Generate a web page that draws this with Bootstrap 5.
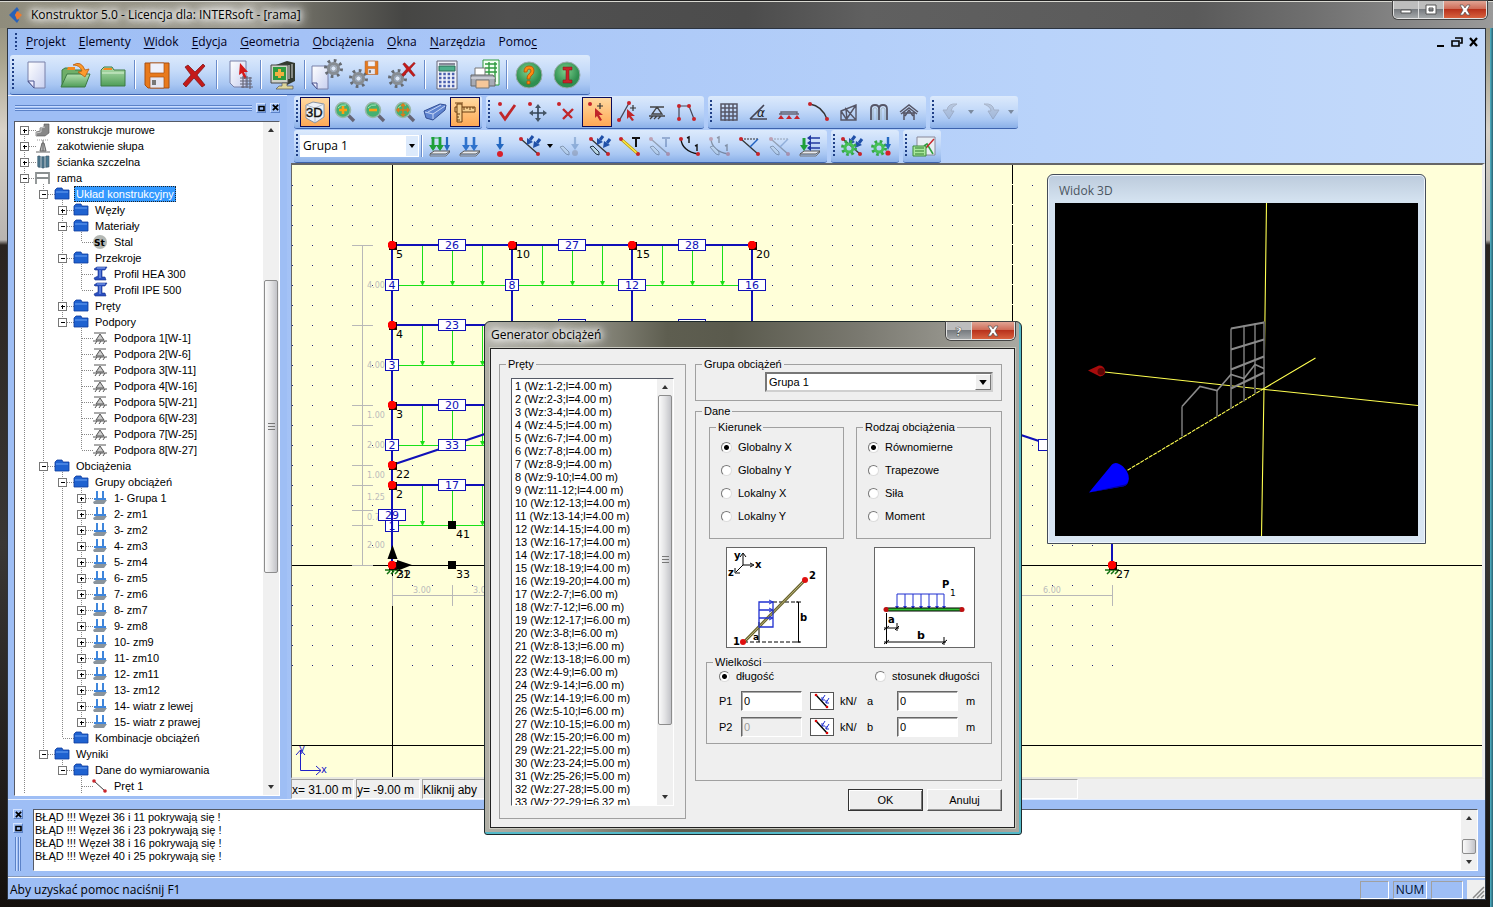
<!DOCTYPE html>
<html lang="pl">
<head>
<meta charset="utf-8">
<meta name="viewport" content="width=device-width, initial-scale=1">
<title>Konstruktor 5.0 - [rama]</title>
<link rel="stylesheet" href="https://cdn.jsdelivr.net/npm/bootstrap@5.3.0/dist/css/bootstrap.min.css">
<style>
:root{--ui:"Open Sans","Noto Sans",sans-serif;--sys:"Liberation Sans",Arial,sans-serif;--blue:#9ebef5}
body{font:11px/16px var(--sys);color:#000;overflow:hidden;background:#000}
.win{padding:0 7px 7px 7px;background:
 linear-gradient(90deg,transparent calc(100% - 3px),#4fb4c8 calc(100% - 3px),#2a6070 100%),
 linear-gradient(180deg,#8b8878 0,#a9a48e 60px,#d8d2c8 130px,#b8b4b0 240px,#2a2420 245px,#3a3734 60%,#14100d 100%)}
.win-title{height:28px;font:12px/16px var(--ui);margin:0 -7px;padding:0 6px 0 9px;border-top:1px solid #222;box-shadow:inset 0 1px #d9d9d2;
 background:linear-gradient(90deg,#8f8c7c 0,#a09e94 17%,#6a6961 21%,#464644 27%,#505050 34%,#4c4c4c 50%,#606060 58%,#5a5a5a 80%,#707070 88%,#9a9a9a 100%)}
.glow{text-shadow:0 0 5px #fff,0 0 8px #fff,0 0 10px #fff,0 0 12px #fff,0 0 14px #eee;white-space:nowrap}
.client{background:linear-gradient(90deg,#9ebef5 0,#a4c2f6 20%,#b9d3fa 70%,#c4dafa 100%);border:1px solid #2c3440;min-height:0}
.cap{border:1px solid #e3e3e3;border-top:0;border-radius:0 0 5px 5px;overflow:hidden;height:18px;align-self:flex-start;box-shadow:0 0 0 1px #444}
.cap button{border:0;padding:0;height:17px;width:25px;background:linear-gradient(#bdbdbd 0 45%,#777b80 50%,#a5a8aa);border-right:1px solid #ddd;display:flex;align-items:center;justify-content:center}
.cap .x{background:linear-gradient(#e0a494 0,#cf6d59 45%,#b8321c 50%,#d8613e);border:0;width:42px}
.menu{height:26px;font:12px/16px var(--ui);padding:0 0 1px 5px}
.menu a{color:#00001c;text-decoration:none;margin-right:13px}
.menu u{text-underline-offset:2px}
.grip{width:3px;align-self:stretch;margin:4px 1px 4px 2px;background:repeating-linear-gradient(#1f3f86 0 2px,transparent 2px 4px);background-clip:content-box;padding-right:1px;flex:none}
.tb{display:flex;align-items:center;background:linear-gradient(#dceafc 0,#c6dbf9 40%,#a9c7f3 75%,#8bb0e8 100%);border-bottom:1px solid #3d63ad;border-radius:3px;height:33px;padding-right:2px}
.tb button{border:0;background:none;padding:0;width:30px;height:30px;display:flex;align-items:center;justify-content:center;flex:none}
.tb button svg{width:24px;height:24px}
.tb button.on{border:1px solid #0b0b5a;background:linear-gradient(#ffd9a0,#ffa955)}
.tb button.dim{opacity:.35;filter:saturate(.7)}
.tb button.dd{width:10px}.tb button.dd svg{width:6px;height:4px}
.tb.big{height:40px;padding-right:4px}.tb.big button{width:38px;height:38px}.tb.big button svg{width:32px;height:32px}
.mainbar{padding-left:2px}
.tb.big .grip{margin-right:3px}
.tb i{width:2px;margin:5px 2px;align-self:stretch;background:linear-gradient(90deg,#6a8ccb 50%,#fff 50%);flex:none}
.rows{padding:1px 0 0 3px;gap:1px}
.left-dock{width:279px;background:var(--blue);border-top:1px solid #eef4ff;padding:0 7px 3px 6px}
.dockhead{height:25px;padding:0 0 2px 1px}
.bars{flex:1;height:6px;border:solid #5b82c8;border-width:1px 0;background:linear-gradient(#c9dcff 0 1px,var(--blue) 1px 2px,#5b82c8 2px 3px,#c9dcff 3px)}
.mini{width:10px;height:10px;padding:0;border:1px solid;border-color:#d4e3ff #5b82c8 #5b82c8 #d4e3ff;background:none;display:flex;align-items:center;justify-content:center}
.mini svg{display:block}
.sunk{background:#fff;border:1px solid;border-color:#555a66 #fff #fff #555a66;min-height:0}
.tree-row{height:16px;display:flex;white-space:nowrap}
.tree-row svg{flex:none}
.tree-row span{padding:0 2px;line-height:16px}
.tree-row .sel{background:#3399ff;color:#fff;outline:1px dotted #222;outline-offset:-1px}
.sb{width:16px;background:#f0f0f0;flex:none;display:flex;flex-direction:column;align-items:center}
.sb svg{flex:none;height:16px;width:8px}
.thumb{width:14px;border:1px solid #8c8c8c;border-radius:2px;background:linear-gradient(90deg,#fafafa,#e2e2e4 50%,#c2c3c8);display:flex;align-items:center;justify-content:center}
.thumb b{width:7px;height:8px;background:repeating-linear-gradient(#777 0 1px,transparent 1px 3px)}
.canvas{background:#ffffd9;border:1px solid #666;border-width:2px 0 0 1px;border-right:3px solid #eee;border-bottom:2px solid #e8e8e0;min-height:0;overflow:hidden}
.canvas svg{display:block;width:100%;height:100%}
.coords{height:20px;background:#efefef;font-size:12px;line-height:20px;gap:2px}
.pane{border:1px solid;border-color:#a0a0a0 #fff #fff #a0a0a0;white-space:nowrap;overflow:hidden}
.out{background:var(--blue);height:78px;padding:9px 7px 6px 5px;border-top:1px solid #e6efff;gap:10px}
.out pre{font:11px/13px var(--sys);margin:0;padding:1px;overflow:hidden}
.vbars{width:6px;flex:1;border:solid #5b82c8;border-width:0 1px;background:linear-gradient(90deg,#c9dcff 1px,var(--blue) 1px 2px,#5b82c8 2px 3px,#c9dcff 3px)}
.status{height:22px;background:var(--blue);font:12px/18px var(--ui);border-top:1px solid #fff;padding:2px 0 0 2px;box-shadow:0 -1px #8798b8}
.status .pane{width:29px;height:18px;line-height:16px;color:#001030}
.v3d{position:absolute;left:1047px;top:174px;width:379px;height:370px;border:1px solid #444c58;border-radius:6px 6px 0 0;background:linear-gradient(#bccbdc 0,#d4e2f0 26px,#d9e6f3);box-shadow:inset 0 0 0 1px #eef5fb;padding:0 7px 7px;color:#4a5560;font:12px/16px var(--ui)}
.v3d svg{background:#000;display:block;width:100%;flex:1;min-height:0}
.dlg{position:absolute;left:484px;top:321px;width:538px;height:514px;border-radius:6px 6px 3px 3px;border:1px solid #1e2a2c;padding:0 6px 6px 5px;
 background:linear-gradient(90deg,transparent calc(100% - 2px),#54b9c8 0),linear-gradient(0deg,#54b9c8 2px,transparent 2px),linear-gradient(90deg,#b0afa6 0,#9a998e 16%,#5e5e50 34%,#5a5a4d 46%,#7a7970 70%,#aaa9a2 100%)}
.dlg-title{height:26px;font:12px/16px var(--ui);padding-left:1px}
.face{background:#efefef;border:1px solid #222;box-shadow:0 0 0 1px #c9c9c0;min-height:0;padding:9px 12px 8px 8px;gap:9px}
.dlg fieldset{border:1px solid #a0a0a0;min-width:0;margin:0;padding:0}
.dlg legend{float:none;width:auto;font-size:11px;line-height:12px;margin:0 0 0 6px;padding:0 2px}
.kinds{padding:4px 10px 0 13px}
.kind{width:135px;height:118px}
.opts{padding:6px 0 0 11px;display:grid;gap:7px}
.pics{padding:8px 26px 0 30px}
.dlg .sizes{height:88px;margin:8px 9px 0 10px}
.listbox{height:428px;margin:8px 11px 12px}
.plist{border:0;outline:0;padding:1px 2px;overflow:hidden;font:11px/13px var(--sys);background:#fff;color:#000;min-width:0}
.plist::-webkit-scrollbar{width:0}
.plist option{padding:0 1px;height:13px;min-height:13px}
.combo{appearance:none;border:2px solid;border-color:#777 #d0d0d0 #d0d0d0 #777;background:#fff;font:11px/14px var(--sys);padding:0 2px;height:20px;border-radius:0;width:100%;color:#000}
.tb .combo{border:1px solid #fff;font:12px/16px var(--ui);width:119px;height:22px}
.arrowbtn{position:absolute;right:2px;top:2px;bottom:2px;width:16px;background:#efefef;border:1px solid;border-color:#fff #777 #777 #fff;display:flex;align-items:center;justify-content:center;pointer-events:none}
.tb .arrowbtn{background:#dceafc;right:1px;top:1px;bottom:1px;width:12px;border:0}
.opt{display:flex;align-items:center;gap:6px}
.opt input{appearance:none;width:11px;height:11px;border-radius:50%;margin:0;border:1px solid;border-color:#777 #ddd #ddd #777;background:#fff;flex:none}
.opt input:checked{background:radial-gradient(circle,#000 0 2px,#fff 3px)}
.num{width:61px;height:20px;border:1px solid;border-color:#666 #fff #fff #666;box-shadow:inset 1px 1px #aaa;padding:0 2px;font:11px/14px var(--sys);background:#fff;border-radius:0}
.num:disabled{background:#efefef;color:#999}
.pic{width:101px;height:101px;border:1px solid #666;background:#fff}
.unit{border:1px solid #555;background:#fff;width:24px;height:18px;padding:0;display:flex}
.qty{display:grid;grid-template-columns:22px 69px 30px 27px 30px 69px auto;align-items:center;height:26px}
.push{width:75px;height:22px;padding:0;border:1px solid;border-color:#fff #555 #555 #fff;background:#efefef;box-shadow:inset -1px -1px #a0a0a0;font-size:11px;color:#000}
.push.def{border:1px solid #333;box-shadow:inset 1px 1px #fff,inset -1px -1px #777}
svg text{font-family:"DejaVu Sans",Verdana,sans-serif}
</style>
</head>
<body>
<svg class="position-absolute" width="0" height="0" xmlns="http://www.w3.org/2000/svg" aria-hidden="true">
 <defs>
 <linearGradient id="gGreen" x1="0" y1="0" x2="0" y2="1"><stop offset="0" stop-color="#b5e0b0"/><stop offset="1" stop-color="#4f9d58"/></linearGradient>
 <linearGradient id="gPage" x1="0" y1="0" x2="1" y2="1"><stop offset="0" stop-color="#fff"/><stop offset="1" stop-color="#c8d0f0"/></linearGradient>
 <radialGradient id="gDisc" cx=".45" cy=".35"><stop offset="0" stop-color="#7ccf8c"/><stop offset="1" stop-color="#2f8f50"/></radialGradient>
 </defs>
</svg>
<svg class="d-none" xmlns="http://www.w3.org/2000/svg" aria-hidden="true">
 <symbol id="page" viewBox="0 0 32 32"><path d="M7 3h17v26H13L7 23z" fill="url(#gPage)" stroke="#7880a8"/><path d="M7 22l6 7v-7z" fill="#eef" stroke="#4a5590"/></symbol>
 <symbol id="fopen" viewBox="0 0 32 32"><path d="M3 11l3-2h8l2 2h9v5L9 27H3z" fill="#6fae68" stroke="#3d7a44"/><path d="M9 8h7v3H8z" fill="#f28a20"/><path d="M2 28l6-13h23l-5 13z" fill="url(#gGreen)" stroke="#3d7a44"/><path d="M14 6q8-5 12 5l4-1-4 8-7-5 4-1q-2-6-9-6z" fill="#ff9a2b" stroke="#b65c10" stroke-width=".8"/></symbol>
 <symbol id="fold" viewBox="0 0 32 32"><path d="M4 27V11l3-3h8l2 3h11v16z" fill="url(#gGreen)" stroke="#3d7a44"/><path d="M5 14h22" stroke="#d9f2d4"/><path d="M7 9h8v2H6z" fill="#f28a20"/></symbol>
 <symbol id="disk" viewBox="0 0 32 32"><path d="M4 4h24v25H7l-3-3z" fill="#e87a1c" stroke="#a84f10"/><path d="M9 4h14v10H9z" fill="#eef0fa" stroke="#a84f10" stroke-width=".7"/><path d="M9 18h14v11H9z" fill="#e4e6f2" stroke="#a84f10" stroke-width=".7"/><path d="M11 21h4v5h-4z" fill="#777"/></symbol>
 <symbol id="cross" viewBox="0 0 32 32"><path d="M6 8l3-2 7 7 8-8 2 2-8 9 8 10-3 2-8-9-8 9-3-3 8-9z" fill="#c41a1a" stroke="#7a0f0f" stroke-width=".7"/></symbol>
 <symbol id="curs" viewBox="0 0 32 32"><path d="M7 2h16v26H11l-4-4z" fill="url(#gPage)" stroke="#7880a8"/><path d="M17 4l8 9h-4l3 6-3 1-2-6-3 2z" fill="#d41a1a"/><path d="M17 19h12M17 22h12M17 25h12M18 28h12M20 17v12M24 17v12M27 18v12" stroke="#667" stroke-width="1.2"/></symbol>
 <symbol id="boxx" viewBox="0 0 32 32"><path d="M6 7l14-5 8 2v18l-8 4z" fill="#333a30"/><path d="M4 6h17v18H4z" fill="#cfd2c8" stroke="#444"/><path d="M6 8h13v13H6z" fill="#2f9a3f"/><path d="M8 13h9v4H8zM11 10h3v9h-3z" fill="#f3b040"/><path d="M22 6v14M25 5v14" stroke="#ddd"/><path d="M15 24h5v3h6v3H9l3-3h3z" fill="#ddd59a" stroke="#555" stroke-width=".7"/></symbol>
 <symbol id="gear" viewBox="0 0 32 32"><circle cx="16" cy="16" r="12" fill="none" stroke="#666b72" stroke-width="5" stroke-dasharray="4 5.425"/><circle cx="16" cy="16" r="7.500" fill="none" stroke="#878d93" stroke-width="5"/><circle cx="16" cy="16" r="4" fill="#dce8f8" stroke="#555" stroke-width=".8"/></symbol>
 <symbol id="pgear" viewBox="0 0 32 32"><path d="M1 7h16v23H6l-5-5z" fill="url(#gPage)" stroke="#7880a8"/><path d="M1 24l5 6v-6z" fill="#eef" stroke="#4a5590"/><use href="#gear" x="12" y="-1" width="21" height="21"/></symbol>
 <symbol id="sgear" viewBox="0 0 32 32"><use href="#gear" x="-1" y="9" width="21" height="21"/><use href="#disk" x="14" y="0" width="17" height="17"/></symbol>
 <symbol id="xgear" viewBox="0 0 32 32"><use href="#gear" x="0" y="9" width="21" height="21"/><use href="#cross" x="12" y="0" width="20" height="20"/></symbol>
 <symbol id="calc" viewBox="0 0 32 32"><path d="M6 2h20v28H6z" fill="#eef1fa" stroke="#667"/><path d="M8 7h16v5H8z" fill="#4fae8c" stroke="#2a6d55"/><path d="M8 4h16v2H8z" fill="#889"/><path d="M8 15h16M8 19h16M8 23h16M8 27h16" stroke="#4a5fae" stroke-width="2.400" stroke-dasharray="2.500 1.800"/></symbol>
 <symbol id="print" viewBox="0 0 32 32"><path d="M14 1h16v25H14z" fill="#f2fff2" stroke="#2f9a3f"/><path d="M16 5h12M16 9h12M16 13h12M20 3v18M26 3v20" stroke="#2f9a3f" stroke-width="1.400"/><path d="M6 9h10v8H6z" fill="#fff" stroke="#777"/><path d="M2 16h22l2 3v8H2z" fill="#a7abb5" stroke="#666"/><path d="M7 21h13v8H7z" fill="#f5c79a" stroke="#777"/><path d="M2 19h24" stroke="#e8e8ee"/></symbol>
 <symbol id="help" viewBox="0 0 32 32"><circle cx="16" cy="16" r="13" fill="url(#gDisc)" stroke="#9aa"/><path d="M11 13q0-6 5-6t5 5q0 3-3 5-1 1-1 3h-3q0-4 2-5 2-2 2-3 0-2-2-2t-2 3zM14 22h3v3h-3z" fill="#ff8a10" stroke="#b65000" stroke-width=".8"/></symbol>
 <symbol id="info" viewBox="0 0 32 32"><circle cx="16" cy="16" r="13" fill="url(#gDisc)" stroke="#9aa"/><path d="M12 8h9v3h-3v10h3v3h-9v-3h3V11h-3z" fill="#c8242a" stroke="#801015" stroke-width=".5"/></symbol>

 <symbol id="v3" viewBox="0 0 24 24"><path d="M3 5l7-3 11 2v13l-9 6-9-5z" fill="#eef1f6" stroke="#8a94a4"/><path d="M3 5l9 3 9-4M12 8v14" stroke="#b4bccb" fill="none"/><text x="3" y="17" font-size="13" fill="#111" stroke="#111" stroke-width=".4" style="font-family:'Liberation Sans'">3D</text></symbol>
 <symbol id="lens" viewBox="0 0 24 24"><path d="M15 15l6 6" stroke="#667" stroke-width="3.400"/><circle cx="10" cy="10" r="7.500" fill="#45b070" stroke="#9bb8a8" stroke-width="1.600"/><path d="M5 8q3-4 8-3" stroke="#a6e8bf" fill="none"/></symbol>
 <symbol id="zin" viewBox="0 0 24 24"><use href="#lens"/><path d="M6 10h8M10 6v8" stroke="#ffa010" stroke-width="2.600"/></symbol>
 <symbol id="zout" viewBox="0 0 24 24"><use href="#lens"/><path d="M6 10h8" stroke="#ffa010" stroke-width="2.600"/></symbol>
 <symbol id="zall" viewBox="0 0 24 24"><use href="#lens"/><path d="M4 10h12M10 4v12M6 8l-2 2 2 2M14 8l2 2-2 2M8 6l2-2 2 2M8 14l2 2 2-2" stroke="#e07818" stroke-width="1.300" fill="none"/></symbol>
 <symbol id="beam" viewBox="0 0 24 24"><path d="M1 11L17 4l6 1-1 5-12 10-7-2z" fill="#5f84d0" stroke="#334f96"/><path d="M2 12l8 2 12-8M5 12l13-7M10 14v5" stroke="#c6d6f6" fill="none"/></symbol>
 <symbol id="rule" viewBox="0 0 24 24"><path d="M2 7h20v5H2z" fill="#f6cf8f" stroke="#6b3d10"/><path d="M4 4h5v18H4z" fill="#f6cf8f" stroke="#6b3d10"/><path d="M11 7v3M14 7v2M17 7v3M20 7v2M4 14h3M4 17h2M4 20h3M2 3h8" stroke="#6b3d10"/></symbol>
 <symbol id="chk" viewBox="0 0 24 24"><circle cx="5" cy="4" r="2" fill="#c8242a"/><path d="M5 12l5 7L20 5" stroke="#c0262a" stroke-width="2.800" fill="none"/></symbol>
 <symbol id="move" viewBox="0 0 24 24"><circle cx="5" cy="4" r="2" fill="#c8242a"/><path d="M7 13h12M13 7v12" stroke="#345" stroke-width="1.600"/><path d="M13 4l3 4h-6zM13 22l3-4h-6zM4 13l4-3v6zM22 13l-4-3v6z" fill="#456"/></symbol>
 <symbol id="del" viewBox="0 0 24 24"><circle cx="4" cy="4" r="2" fill="#c8242a"/><path d="M8 9l9 9M18 9L8 19" stroke="#c0262a" stroke-width="2.400"/></symbol>
 <symbol id="padd" viewBox="0 0 24 24"><circle cx="5" cy="4" r="2" fill="#c8242a"/><path d="M10 8l8 7h-4l3 5-2 1-3-5-2 2z" fill="#c0262a"/><path d="M12 6h6M15 3v6" stroke="#333" stroke-width="1.200"/></symbol>
 <symbol id="madd" viewBox="0 0 24 24"><path d="M4 21L14 3" stroke="#445" stroke-width="1.300"/><circle cx="4" cy="20" r="2" fill="#c8242a"/><circle cx="14" cy="3" r="2" fill="#c8242a"/><path d="M12 9l8 7h-4l3 4-2 1-3-4-2 2z" fill="#c0262a"/><path d="M15 8h6M18 5v6" stroke="#333" stroke-width="1.200"/></symbol>
 <symbol id="sup" viewBox="0 0 24 24"><path d="M5 7h14M12 7l5 7H7zM4 16h16M5 19l3-3M9 19l3-3M13 19l3-3" stroke="#444" fill="none" stroke-width="1.300"/></symbol>
 <symbol id="frame" viewBox="0 0 24 24"><path d="M4 19V6h10l5 13" stroke="#445" fill="none" stroke-width="1.200"/><g fill="#c8242a"><circle cx="4" cy="6" r="2"/><circle cx="14" cy="6" r="2"/><circle cx="4" cy="19" r="2"/><circle cx="19" cy="19" r="2"/></g></symbol>
 <symbol id="mesh" viewBox="0 0 24 24"><path d="M4 4h16v16H4zM8 4v17M12 4v17M16 4v17M4 8h16M4 12h16M4 16h16M4 20h16" stroke="#556" fill="none" stroke-width="1.500"/></symbol>
 <symbol id="ang" viewBox="0 0 24 24"><path d="M3 19L17 5M3 19h17" stroke="#445" stroke-width="1.600"/><text x="10" y="17" font-size="12" font-style="italic" fill="#222">α</text></symbol>
 <symbol id="cont" viewBox="0 0 24 24"><path d="M2 14h20M4 14v-2h16v2" stroke="#667" stroke-width="1.400" fill="none"/><path d="M4 15l-3 4h6zM12 15l-3 4h6zM20 15l-3 4h6z" fill="#c8242a"/></symbol>
 <symbol id="arc" viewBox="0 0 24 24"><path d="M3 4q12 2 17 15" stroke="#333" fill="none" stroke-width="1.400"/><circle cx="3" cy="4" r="2" fill="#c8242a"/><circle cx="20" cy="19" r="2" fill="#c8242a"/></symbol>
 <symbol id="truss" viewBox="0 0 24 24"><path d="M4 11l15-6v15H4zM4 11l6 9-1-11 10 11M9 20L19 5" stroke="#556" fill="none" stroke-width="1.400"/></symbol>
 <symbol id="mm" viewBox="0 0 24 24"><path d="M4 20V9q0-4 4-4t4 4v11M12 9q0-4 4-4t4 4v11" stroke="#556" fill="none" stroke-width="1.800"/><path d="M6 20V9q2-3 4 0v11M14 20V9q2-3 4 0v11" stroke="#9aa" fill="none" stroke-width=".7"/></symbol>
 <symbol id="roof" viewBox="0 0 24 24"><path d="M3 12l9-7 9 7M4 14l8-6 8 6M7 20v-8M17 20v-8M7 13h10M12 10l-4 6M12 10l4 6" stroke="#556" fill="none" stroke-width="1.500"/></symbol>
 <symbol id="undo" viewBox="0 0 24 24"><path d="M18 4q-9-1-10 6H4l6 9 5-8h-3q0-4 6-7z" fill="#8899b8" stroke="#667"/></symbol>
 <symbol id="redo" viewBox="0 0 24 24"><path d="M5 4q9-1 10 6h5l-6 9-5-8h3q0-4-7-7z" fill="#8899b8" stroke="#667"/></symbol>
 <symbol id="dn" viewBox="0 0 6 4"><path d="M0 0h6L3 4z"/></symbol>
 <symbol id="slab" viewBox="0 0 24 24"><path d="M2 20l4-3h16l-4 3z" fill="#e8ebf0" stroke="#555"/><path d="M2 20v2h16l4-4" fill="none" stroke="#777"/></symbol>
 <symbol id="l3" viewBox="0 0 24 24"><use href="#slab"/><path d="M5 3v12M12 3v12" stroke="#1fa03a" stroke-width="2.800"/><path d="M1 11h8l-4 6zM8 11h8l-4 6z" fill="#1fa03a"/><path d="M3 4h10" stroke="#1fa03a"/><path d="M19 3v10" stroke="#2468c0" stroke-width="2.200"/><path d="M16 11h6l-3 6z" fill="#2468c0"/></symbol>
 <symbol id="l2" viewBox="0 0 24 24"><use href="#slab"/><path d="M8 3v10M16 3v10" stroke="#2e72cc" stroke-width="2.600"/><path d="M4 11h8l-4 6zM12 11h8l-4 6z" fill="#2e72cc"/></symbol>
 <symbol id="l1" viewBox="0 0 24 24"><path d="M12 3v9" stroke="#2468c0" stroke-width="2.400"/><path d="M8 10h8l-4 6z" fill="#2468c0"/><circle cx="12" cy="20" r="3" fill="#d8202a"/></symbol>
 <symbol id="arrs" viewBox="0 0 24 24"><path d="M15 2l-3 4M22 5l-3 4" stroke="#2050a8" stroke-width="3"/><path d="M9 4l6 4-6 3zM16 7l6 4-7 3z" fill="#2050a8"/></symbol>
 <symbol id="bar" viewBox="0 0 24 24"><path d="M3 5l17 15" stroke="#333" stroke-width="1.300"/><circle cx="3" cy="5" r="2" fill="#c8242a"/><circle cx="20" cy="20" r="2" fill="#c8242a"/></symbol>
 <symbol id="pen" viewBox="0 0 24 24"><path d="M2 13l3-1 6 6v3l-3-1z" fill="#bcd8e4" stroke="#234"/></symbol>
 <symbol id="bl" viewBox="0 0 24 24"><use href="#bar"/><use href="#arrs"/></symbol>
 <symbol id="pl" viewBox="0 0 24 24"><use href="#pen"/><path d="M17 3v9" stroke="#2468c0" stroke-width="2.200"/><path d="M13 10h8l-4 6z" fill="#2468c0"/><circle cx="17" cy="19" r="3" fill="#778"/></symbol>
 <symbol id="pbl" viewBox="0 0 24 24"><use href="#bar"/><use href="#arrs"/><use href="#pen"/></symbol>
 <symbol id="tt" viewBox="0 0 24 24"><path d="M3 5l17 15" stroke="#b79a00" stroke-width="3"/><path d="M3 5l17 15" stroke="#ffe94a" stroke-width="1.400"/><circle cx="3" cy="5" r="2" fill="#c8242a"/><circle cx="20" cy="20" r="2" fill="#c8242a"/><path d="M14 4h8M18 4v9" stroke="#111" stroke-width="2"/></symbol>
 <symbol id="pt" viewBox="0 0 24 24"><use href="#bar"/><use href="#pen"/><path d="M14 4h8M18 4v9" stroke="#2050a8" stroke-width="2"/></symbol>
 <symbol id="b11" viewBox="0 0 24 24"><path d="M3 5q1 12 17 15" stroke="#111" stroke-width="1.400" fill="none"/><circle cx="3" cy="5" r="2" fill="#c8242a"/><circle cx="20" cy="20" r="2" fill="#c8242a"/><path d="M9 4l2-1v6M17 12l2-1v6" stroke="#111" stroke-width="1.400" fill="none"/></symbol>
 <symbol id="pb11" viewBox="0 0 24 24"><use href="#b11"/><use href="#pen"/></symbol>
 <symbol id="tri" viewBox="0 0 24 24"><path d="M3 5l17 15" stroke="#333" stroke-width="1.300"/><path d="M3 5h18" stroke="#333" stroke-dasharray="2 1"/><path d="M20 5l-8 8" stroke="#2060c0" stroke-width="1.400"/><circle cx="3" cy="5" r="2" fill="#c8242a"/><circle cx="20" cy="20" r="2" fill="#c8242a"/></symbol>
 <symbol id="ptri" viewBox="0 0 24 24"><use href="#tri"/><use href="#pen"/></symbol>
 <symbol id="wind" viewBox="0 0 24 24"><use href="#slab"/><path d="M6 4v9" stroke="#1fa03a" stroke-width="3"/><path d="M2 11h8l-4 6z" fill="#1fa03a"/><path d="M12 4h10M12 9h10M12 14h10" stroke="#2038a0" stroke-width="1.600"/><path d="M9 4l4-3v6zM9 9l4-3v6zM9 14l4-3v6z" fill="#2038a0"/></symbol>
 <symbol id="ggear" viewBox="0 0 24 24"><circle cx="9" cy="14" r="6" fill="none" stroke="#36a846" stroke-width="4" stroke-dasharray="2.400 2.300"/><circle cx="9" cy="14" r="4" fill="none" stroke="#46c056" stroke-width="3"/></symbol>
 <symbol id="gb" viewBox="0 0 24 24"><use href="#bar"/><use href="#arrs"/><use href="#ggear"/></symbol>
 <symbol id="gl" viewBox="0 0 24 24"><use href="#ggear"/><path d="M18 3v9" stroke="#2468c0" stroke-width="2.400"/><path d="M15 10h6l-3 6z" fill="#2468c0"/><circle cx="18" cy="19" r="2.600" fill="#d8202a"/></symbol>
 <symbol id="graph" viewBox="0 0 24 24"><path d="M5 3h18v18H5z" fill="#e8eef4" stroke="#889"/><path d="M12 12l3-2 6 10" stroke="#30a040" stroke-width="1.600" fill="none"/><path d="M14 14L22 5" stroke="#c8242a" stroke-width="1.400"/><path d="M1 12h13v10H1z" fill="#a8e89a" stroke="#3a8a3a"/><path d="M3 14h9M3 17h9M3 20h9" stroke="#2f7d2f"/></symbol>

 <symbol id="t-stairs" viewBox="0 0 16 16"><path d="M1 14v-4l4-1V6l4-1V2h5v9l-4 3z" fill="#888" stroke="#555" stroke-width=".6"/><path d="M1 14v-3l5-1V6l4-1" stroke="#ccc" fill="none"/></symbol>
 <symbol id="t-anch" viewBox="0 0 16 16"><path d="M1 14h14M8 2v11M5 13l2-8h2l2 8z" stroke="#666" fill="#bbb"/><path d="M2 2h12" stroke="#999" stroke-dasharray="1 1"/></symbol>
 <symbol id="t-wall" viewBox="0 0 16 16"><path d="M2 2h12v10l-2 2H4l-2-2z" fill="#9fb9c6"/><path d="M3 2h2v11H3zM7 3h2v11H7zM11 2h3v11h-3z" fill="#4b7c94" stroke="#456" stroke-width=".6"/></symbol>
 <symbol id="t-frame" viewBox="0 0 16 16"><path d="M1 14V3h13v11M1 8h13" fill="none" stroke="#8a8f90" stroke-width="1.800"/></symbol>
 <symbol id="t-fold" viewBox="0 0 16 16"><path d="M1 13V4l2-2h5l1 2h6v9z" fill="#1f62d0" stroke="#0d3a9c" stroke-width=".8"/><path d="M2 6h12" stroke="#6ea4f4"/></symbol>
 <symbol id="t-st" viewBox="0 0 16 16"><circle cx="8" cy="8" r="7" fill="#b4b8b4"/><text x="2" y="12" font-size="9" font-weight="bold">St</text></symbol>
 <symbol id="t-prof" viewBox="0 0 16 16"><path d="M2 3l3-2h10l-2 3h-3v7h3l1 3H3l-1-2 4-2V4H3z" fill="#2a4fc0" stroke="#14308a" stroke-width=".6"/><path d="M5 2h8M8 4v8" stroke="#8fb0f4"/></symbol>
 <symbol id="t-sup" viewBox="0 0 16 16"><path d="M2 3h12M8 4l4 6H4zM1 11h14M3 14l2-3M7 14l2-3M11 14l2-3" stroke="#555" fill="#ccc"/></symbol>
 <symbol id="t-load" viewBox="0 0 16 16"><path d="M1 12l3-2h11l-3 4H2z" fill="#8a949c"/><path d="M5 1v8M11 1v8M2 9h12" stroke="#3f86dc" stroke-width="2"/></symbol>
 <symbol id="t-bar" viewBox="0 0 16 16"><path d="M2 3l11 10" stroke="#333"/><circle cx="2" cy="3" r="1.800" fill="#c8242a"/><circle cx="13" cy="13" r="1.800" fill="#c8242a"/></symbol>
 <symbol id="up" viewBox="0 0 8 16"><path d="M1 10h6L4 6z" fill="#333"/></symbol>
 <symbol id="down" viewBox="0 0 8 16"><path d="M1 6h6L4 10z" fill="#333"/></symbol>
 <symbol id="xx" viewBox="0 0 8 8"><path d="M1 1l6 6M7 1L1 7" stroke="#000" stroke-width="2"/></symbol>
 <symbol id="sq" viewBox="0 0 8 8"><path d="M2 2.500h5v4H2z" fill="none" stroke="#000" stroke-width="1.600"/></symbol>
</svg>

<div class="win vh-100 d-flex flex-column position-relative">
 <header class="win-title d-flex align-items-center">
  <svg width="14" height="16" viewBox="0 0 14 16"><path d="M8 0L0 8l8 8 2-3-4-5 4-5z" fill="#2a62b8"/><path d="M8 4l5 4-5 5-2-5z" fill="#ee7a30"/></svg>
  <span class="glow flex-fill ps-2">Konstruktor 5.0 - Licencja dla: INTERsoft - [rama]</span>
  <div class="cap d-flex">
   <button aria-label="Minimalizuj"><svg width="12" height="12"><path d="M1 6h10v3H1z" fill="#fff" stroke="#555"/></svg></button>
   <button aria-label="Maksymalizuj"><svg width="12" height="12"><path d="M1 1h10v9H1zM4 4h4v3H4z" fill="#fff" fill-rule="evenodd" stroke="#555"/></svg></button>
   <button class="x" aria-label="Zamknij"><svg width="12" height="12"><path d="M1 1h3l2 3 2-3h3L8 6l3 5H8L6 8l-2 3H1l3-5z" fill="#fff" stroke="#555" stroke-width=".7"/></svg></button>
  </div>
 </header>

 <div class="client d-flex flex-column flex-fill">
  <nav class="menu d-flex align-items-center">
   <div class="grip me-2"></div>
   <a href="#"><u>P</u>rojekt</a><a href="#"><u>E</u>lementy</a><a href="#"><u>W</u>idok</a><a href="#"><u>E</u>dycja</a><a href="#"><u>G</u>eometria</a><a href="#"><u>O</u>bciążenia</a><a href="#"><u>O</u>kna</a><a href="#"><u>N</u>arzędzia</a><a href="#">Pomo<u>c</u></a>
   <svg class="ms-auto me-1" width="46" height="12" viewBox="0 0 46 12"><path d="M2 9h7v2H2z"/><path d="M20 2h7v5h-2M17 5h7v5h-7z" fill="none" stroke="#000" stroke-width="1.600"/><path d="M35 2l7 8M42 2l-7 8" stroke="#000" stroke-width="2.200"/></svg>
  </nav>
  <div class="mainbar d-flex"><div class="tb big" id="tbMain"></div></div>

  <div class="d-flex flex-fill" style="min-height:0">
   <aside class="left-dock d-flex flex-column flex-shrink-0">
    <div class="dockhead d-flex align-items-center gap-1">
     <div class="bars"></div>
     <button class="mini" aria-label="Przypnij"><svg width="8" height="8"><use href="#sq"/></svg></button>
     <button class="mini" aria-label="Zamknij panel"><svg width="7" height="7"><use href="#xx"/></svg></button>
    </div>
    <div class="sunk d-flex flex-fill">
     <div class="flex-fill overflow-hidden" id="tree"></div>
     <div class="sb"><svg><use href="#up"/></svg><div style="flex:142"></div><div class="thumb" style="flex:292"><b></b></div><div style="flex:206"></div><svg><use href="#down"/></svg></div>
    </div>
   </aside>
   <main class="d-flex flex-column flex-fill ms-1" style="min-width:0">
    <div class="rows d-flex flex-column">
     <div class="d-flex gap-1"><div class="tb" id="tb1"></div><div class="tb" id="tb2"></div><div class="tb" id="tb3"></div><div class="tb" id="tb4"></div></div>
     <div class="d-flex gap-1"><div class="tb" id="tb5"><div class="grip"></div>
       <div class="position-relative"><select class="combo" aria-label="Grupa"><option>Grupa 1</option></select><span class="arrowbtn"><svg width="6" height="4"><use href="#dn"/></svg></span></div><i></i></div>
      <div class="tb" id="tb6"></div><div class="tb" id="tb7"></div></div>
    </div>
    <div class="canvas flex-fill">
     <svg id="plan"><g transform="translate(-292,-165)">
      <defs><pattern id="dots" x="392" y="185" width="20" height="20" patternUnits="userSpaceOnUse"><rect width="1" height="1" fill="#222280"/></pattern></defs>
      <rect x="292" y="185" width="821" height="481" fill="url(#dots)"/>
      <g stroke="#000" shape-rendering="crispEdges"><path d="M392.500 160V800M292 565.500H1484M292 745.500H1484"/><path d="M1012.500 165V800" stroke-dasharray="19 1"/></g>
      <g id="model"></g>
      <path d="M300.500 750v20.500h20M296 755l4.500-5 4.500 5M316 766l5 4.500-5 4.500" fill="none" stroke="#2020c8"/>
      <text x="299" y="752" font-size="10" fill="#2020c8">y</text><text x="321" y="773" font-size="10" fill="#2020c8">x</text>
     </g></svg>
    </div>
    <div class="coords d-flex"><div class="pane" style="width:63px">x= 31.00 m</div><div class="pane" style="width:64px">y= -9.00 m</div><div class="pane" style="width:656px">Kliknij aby</div></div>
   </main>
  </div>

  <section class="out d-flex">
   <div class="d-flex flex-column align-items-center gap-1">
    <button class="mini" aria-label="Zamknij okno"><svg width="7" height="7"><use href="#xx"/></svg></button>
    <button class="mini" aria-label="Przypnij okno"><svg width="8" height="8"><use href="#sq"/></svg></button>
    <div class="vbars"></div>
   </div>
   <div class="sunk d-flex flex-fill">
    <pre class="flex-fill">BŁĄD !!! Węzeł 36 i 11 pokrywają się !
BŁĄD !!! Węzeł 36 i 23 pokrywają się !
BŁĄD !!! Węzeł 38 i 16 pokrywają się !
BŁĄD !!! Węzeł 40 i 25 pokrywają się !</pre>
    <div class="sb"><svg><use href="#up"/></svg><div class="flex-fill"></div><div class="thumb" style="flex:0 0 15px"></div><svg><use href="#down"/></svg></div>
   </div>
  </section>
  <footer class="status d-flex align-items-center gap-1">
   <span class="flex-fill">Aby uzyskać pomoc naciśnij F1</span>
   <div class="pane"></div><div class="pane text-center" style="width:34px">NUM</div><div class="pane" style="width:32px"></div>
   <svg width="18" height="19"><path d="M0 0h18v19H0z" fill="#efefef"/><path d="M6 18L17 7M10 18l7-7M14 18l3-3" stroke="#888" stroke-width="1.500"/></svg>
  </footer>
 </div>

 <section class="v3d d-flex flex-column">
  <div class="ps-1 pt-2 pb-1">Widok 3D</div>
  <svg viewBox="1055 202 363 334" preserveAspectRatio="xMidYMid slice">
   <g stroke="#ffff50" stroke-width="1.100" fill="none"><path d="M1266.500 202L1264 388l-2.500 148M1100 371l165 18 153 16M1315.500 357.500L1264 388"/><path d="M1264 388l-137 82" stroke-dasharray="4 1"/></g>
   <g fill="none" stroke="#8a8a8a" stroke-width="2"><path d="M1231 328v80M1244 325v76M1255 323v70M1264 321v66M1182 406v30M1217 390v26" stroke="#5c5c5c"/><path d="M1231 328l33-6M1231 349l33-10M1231 369l33-13M1231 388l33-16"/><path d="M1182 406l18-20 17 4 14-16 13 4 11-14 9 4" stroke-width="1.600"/></g>
   <path d="M1088 370l11-5q5 0 6 5t-5 6z" fill="#a80c0c"/><circle cx="1101" cy="371" r="3.500" fill="#5c0505"/>
   <path d="M1089 492l23-28q4-4 11 2 8 8 5 16-2 4-6 4z" fill="#0000ff"/><path d="M1089 492l36-8q4-2 4-6-1 7-6 8z" fill="#0000a0"/>
  </svg>
 </section>

 <form class="dlg d-flex flex-column">
  <div class="dlg-title d-flex align-items-center">
   <span class="glow flex-fill">Generator obciążeń</span>
   <div class="cap d-flex"><button type="button" aria-label="Pomoc"><svg width="12" height="14"><text x="2" y="12" font-size="12" font-weight="bold" fill="#fff" stroke="#444" stroke-width=".5">?</text></svg></button><button type="button" class="x" aria-label="Zamknij okno dialogowe"><svg width="12" height="12"><path d="M1 1h3l2 3 2-3h3L8 6l3 5H8L6 8l-2 3H1l3-5z" fill="#fff" stroke="#555" stroke-width=".7"/></svg></button></div>
  </div>
  <div class="face d-flex flex-fill">
   <fieldset class="d-flex flex-column" style="width:187px"><legend>Pręty</legend>
    <div class="sunk listbox d-flex">
     <select multiple class="plist flex-fill" id="bars" aria-label="Pręty"></select>
     <div class="sb"><svg><use href="#up"/></svg><div class="thumb" style="flex:330"><b></b></div><div style="flex:64"></div><svg><use href="#down"/></svg></div>
    </div>
   </fieldset>
   <div class="d-flex flex-column flex-fill">
    <fieldset style="height:43px"><legend>Grupa obciążeń</legend>
     <div class="position-relative ms-auto me-2" style="width:228px;margin-top:2px"><select class="combo" aria-label="Grupa obciążeń"><option>Grupa 1</option></select><span class="arrowbtn"><svg width="8" height="5"><use href="#dn"/></svg></span></div>
    </fieldset>
    <fieldset class="mt-1" style="height:376px"><legend>Dane</legend>
     <div class="kinds d-flex justify-content-between">
      <fieldset class="kind"><legend>Kierunek</legend><div class="opts" data-name="dir" data-items="Globalny X,Globalny Y,Lokalny X,Lokalny Y"></div></fieldset>
      <fieldset class="kind"><legend>Rodzaj obciążenia</legend><div class="opts" data-name="type" data-items="Równomierne,Trapezowe,Siła,Moment"></div></fieldset>
     </div>
     <div class="pics d-flex justify-content-between">
      <div class="pic"><svg width="99" height="99" viewBox="0 0 99 99">
       <g fill="none" stroke="#000"><path d="M16 17V6M16 17h9M16 17l-7 7M13 9l3-4 3 4M23 15l4 2-4 2M8 20v5h5"/><path d="M17 94h56M46 54h25" stroke-dasharray="4 2"/><path d="M71.500 54v40M32 74v20M69 54h5M69 94h5"/></g>
       <path d="M17 94L78 32" stroke="#66602a" stroke-width="3"/><path d="M17 94L78 32" stroke="#d8d49a" stroke-width=".8"/>
       <path d="M32 54h14v25H32zM32 62h13M32 70h13" fill="none" stroke="#2030d0" stroke-width="1.300"/><path d="M42 52l4 2-4 2M42 60l4 2-4 2M42 68l4 2-4 2" fill="none" stroke="#2030d0"/>
       <circle cx="16" cy="94" r="3" fill="#e01010"/><circle cx="78" cy="32" r="3" fill="#e01010"/>
       <g font-size="10" font-weight="bold"><text x="7" y="11">y</text><text x="28" y="20">x</text><text x="1" y="28">z</text><text x="82" y="31">2</text><text x="6" y="97">1</text><text x="26" y="92" font-size="9">a</text><text x="73" y="73">b</text></g></svg></div>
      <div class="pic"><svg width="99" height="99" viewBox="0 0 99 99">
       <path d="M22 61V46h47v15M30 46v14M38 46v14M46 46v14M54 46v14M62 46v14" fill="none" stroke="#2030d0"/><path d="M20 58h4l-2 3zM28 58h4l-2 3zM36 58h4l-2 3zM44 58h4l-2 3zM52 58h4l-2 3zM60 58h4l-2 3zM67 58h4l-2 3z" fill="#2030d0"/>
       <path d="M11 61.500h76" stroke="#000" stroke-width="4"/><path d="M11 61.500h76" stroke="#30c030" stroke-width="2"/><circle cx="11" cy="61.500" r="2.500" fill="#c01010"/><circle cx="87" cy="61.500" r="2.500" fill="#c01010"/>
       <path d="M11.500 65v31M9 80h15M22 75v8M9 94h62M69 89v8M9 82l5-4M20 82l4-4M9 96l5-4M67 96l5-4" fill="none" stroke="#000"/>
       <text x="13" y="75" font-size="10" font-weight="bold">a</text><text x="42" y="91" font-size="11" font-weight="bold">b</text><text x="67" y="40" font-size="10" font-weight="bold">P</text><text x="75" y="48" font-size="9">1</text></svg></div>
     </div>
     <fieldset class="sizes"><legend>Wielkości</legend>
      <div class="d-flex ps-2 ms-1"><label class="opt" style="width:156px"><input type="radio" name="len" checked>długość</label><label class="opt"><input type="radio" name="len">stosunek długości</label></div>
      <div class="qty ps-2 ms-1 mt-1"><label for="p1">P1</label><input class="num" id="p1" value="0"><button type="button" class="unit" aria-label="Jednostka P1"><svg width="22" height="16" viewBox="0 0 22 16"><path d="M5 2l11 12" stroke="#000" stroke-width="1.400"/><path d="M14 2l-3 5M18 5l-3 5M11 4v3h3M15 7v3h3" stroke="#2030d0" fill="none"/><circle cx="5" cy="2" r="1.300" fill="#d00"/><circle cx="16" cy="14" r="1.300" fill="#d00"/></svg></button><span>kN/</span><label for="va">a</label><input class="num" id="va" value="0"><span>m</span></div>
      <div class="qty ps-2 ms-1"><label for="p2">P2</label><input class="num" id="p2" value="0" disabled><button type="button" class="unit" aria-label="Jednostka P2"><svg width="22" height="16" viewBox="0 0 22 16"><path d="M5 2l11 12" stroke="#000" stroke-width="1.400"/><path d="M14 2l-3 5M18 5l-3 5M11 4v3h3M15 7v3h3" stroke="#2030d0" fill="none"/><circle cx="5" cy="2" r="1.300" fill="#d00"/><circle cx="16" cy="14" r="1.300" fill="#d00"/></svg></button><span>kN/</span><label for="vb">b</label><input class="num" id="vb" value="0"><span>m</span></div>
     </fieldset>
    </fieldset>
    <div class="d-flex justify-content-end gap-1 mt-2"><button type="button" class="push def">OK</button><button type="button" class="push">Anuluj</button></div>
   </div>
  </div>
 </form>
</div>

<script src="https://cdn.jsdelivr.net/npm/bootstrap@5.3.0/dist/js/bootstrap.bundle.min.js"></script>
<script>
// Toolbars: "|" separator, "*" pressed, "~" disabled, "v" small drop-down arrow
const fill=(id,s,grip=true)=>{const el=document.getElementById(id);let h=grip?'<div class="grip"></div>':'';
 for(const t of s.split(' ')){ if(t==='|'){h+='<i></i>';continue}
  const m=t[0]==='*'?'on':t[0]==='~'?'dim':'',n=t.replace(/^[*~]/,'');
  h+=n==='v'?`<button class="dd ${m}" aria-label="Więcej"><svg><use href="#dn"/></svg></button>`:`<button class="${m}" aria-label="${n}"><svg><use href="#${n}"/></svg></button>`}
 el.insertAdjacentHTML('beforeend',h)};
fill('tbMain','page fopen fold | disk cross | curs | boxx | pgear sgear xgear | calc print | help info');
fill('tb1','*v3 zin zout zall beam *rule');
fill('tb2','chk move del *padd madd sup frame');
fill('tb3','mesh ang cont arc truss mm roof');
fill('tb4','~undo ~v ~redo ~v');
fill('tb5','l3 l2 l1 bl v ~pl pbl tt ~pt b11 ~pb11 tri ~ptri wind',false);
fill('tb6','gb gl');fill('tb7','graph');

// Project tree: [level, state, icon, label]
const T=[[0,'+','stairs','konstrukcje murowe'],[0,'+','anch','zakotwienie słupa'],[0,'+','wall','ścianka szczelna'],[0,'-','frame','rama'],
[1,'-','fold','Układ konstrukcyjny'],[2,'+','fold','Węzły'],[2,'-','fold','Materiały'],[3,'','st','Stal'],[2,'-','fold','Przekroje'],[3,'','prof','Profil HEA 300'],[3,'','prof','Profil IPE 500'],[2,'+','fold','Pręty'],[2,'-','fold','Podpory'],
...[1,6,11,16,21,23,25,27].map((w,i)=>[3,'','sup',`Podpora ${i+1}[W-${w}]`]),
[1,'-','fold','Obciążenia'],[2,'-','fold','Grupy obciążeń'],
...['Grupa 1',...Array.from({length:12},(_,i)=>'zm'+(i+1)),'wiatr z lewej','wiatr z prawej'].map((n,i)=>[3,'+','load',`${i+1}- ${n}`]),
[2,'','fold','Kombinacje obciążeń'],[1,'-','fold','Wyniki'],[2,'-','fold','Dane do wymiarowania'],[3,'','bar','Pręt 1']];
const more=(i,l)=>{for(let j=i+1;j<T.length;j++){if(T[j][0]<l)return false;if(T[j][0]===l)return true}return l===0||(l===3)};
document.getElementById('tree').innerHTML=T.map(([l,s,ic,n],i)=>{
 const w=19*l+40;let d='';
 for(let k=0;k<=l;k++){const x=9.5+19*k;if(k<l){if(more(i,k))d+=`M${x} 0V16`}else{d+=`M${x} ${i?0:8}V${more(i,k)?16:8}M${x} 8.5H${x+12}`}}
 if(s==='-')d+=`M${28.5+19*l} 14V16`;
 const x=5.5+19*l;
 const box=s?`<rect x="${x}" y="4.5" width="8" height="8" fill="#fff" stroke="#777"/><path d="M${x+2} 8.5h4${s==='+'?`M${x+4} 6.500v4`:''}" stroke="#000"/>`:'';
 return `<div class="tree-row"><svg width="${w}" height="16" shape-rendering="crispEdges"><path d="${d}" stroke="#888" stroke-dasharray="1 1" fill="none"/>${box}<use href="#t-${ic}" x="${20+19*l}" y="0" width="16" height="16" shape-rendering="auto"/></svg><span class="${i===4?'sel':''}">${n}</span></div>`}).join('');

// Bars offered in the dialog: start node - end node
const B='1-2 2-3 3-4 4-5 6-7 7-8 8-9 9-10 11-12 12-13 13-14 14-15 16-17 17-18 18-19 19-20 2-7 7-12 12-17 3-8 8-13 13-18 4-9 9-14 14-19 5-10 10-15 15-20 21-22 23-24 25-26 27-28 22-29'.split(' ');
document.getElementById('bars').innerHTML=B.map((b,i)=>`<option>${i+1} (Wz:${b};l=${i<16?'4.00':i<28?'6.00':i<32?'5.00':'6.32'} m)</option>`).join('');
document.querySelectorAll('.opts').forEach(o=>o.innerHTML=o.dataset.items.split(',').map((t,i)=>`<label class="opt"><input type="radio" name="${o.dataset.name}" ${i?'':'checked'}>${t}</label>`).join(''));

// Frame model
let g='';const X=[392,512,632,752],Y=[245,325,405,485];
const tag=(x,y,t,w=t.length>1?27:13)=>`<rect x="${x-(w+1)/2+.5}" y="${y-5.5}" width="${w}" height="11" fill="#fff" stroke="#1010b8" shape-rendering="crispEdges"/>`+(t?`<text x="${x}" y="${y+4}" font-size="11" text-anchor="middle" fill="#1010b8">${t}</text>`:'');
const node=(x,y)=>`<path d="M${x-3} ${y-3}h8v8h-8z" fill="#200"/><path d="M${x-2} ${y-4}h4l2 2v4l-2 2h-4l-2-2v-4z" fill="#f00"/>`;
const lbl=(x,y,t)=>`<text x="${x}" y="${y}" font-size="11">${t}</text>`;
const dim=(x,y,t)=>`<text x="${x}" y="${y}" font-size="8" fill="#bbb">${t}</text>`;
g+='<g stroke="#b8b8b8" shape-rendering="crispEdges"><path d="M362.500 245V565M392 595.500H1112M392.500 576V606M452.500 585V606M1112.500 585V606"/>'+[245,325,405,425,465,485,510,525,565].map(y=>`<path d="M352 ${y}.5h21"/>`).join('')+'</g>';
g+=[[288,'4.00'],[368,'4.00'],[418,'1.00'],[448,'2.00'],[478,'1.00'],[500,'1.25'],[520,'0.75'],[548,'2.00']].map(a=>dim(367,a[0],a[1])).join('')+dim(413,593,'3.00')+dim(473,593,'3.0')+dim(1043,593,'6.00');
Y.forEach(y=>{for(let c=0;c<3;c++){const x=X[c];g+=`<g fill="#18e018"><path d="M${x} ${y+40}h120v1h-120z"/>`+[30,60,90].map(d=>`<path d="M${x+d} ${y}h1v38h-1zM${x+d-2} ${y+36}h5l-2 4h-1z"/>`).join('')+'</g>'}});
g+='<path d="M392 245V565M512 245V565M632 245V565M752 245V565M392 245H752M392 325H752M392 405H752M392 485H752M392 465L512 425M1000 428L1045 443M1112 500V565" stroke="#1010b8" stroke-width="2" fill="none"/>';
[['26','27','28'],['23','',''],['20','',''],['17','','']].forEach((r,j)=>r.forEach((t,i)=>g+=tag(452+120*i,Y[j],t,27)));
['4','8','12','16'].forEach((t,i)=>g+=tag(X[i],285,t));
g+=tag(392,365,'3')+tag(392,445,'2')+tag(452,445,'33')+tag(392,526,'1')+tag(392,515,'29')+tag(1052,445,'',27);
g+='<path d="M392 485V565" stroke="#1010b8" stroke-width="2"/><path d="M392.500 545l5 14h-10zM397 560l15 5-15 6z"/><path d="M448 521h8v8h-8zM448 561h8v8h-8z"/>';
X.forEach(x=>Y.forEach(y=>g+=node(x,y)));
const sup=x=>`<path d="M${x-7} 570h14M${x-5} 574l3-3M${x-1} 574l3-3M${x+3} 574l3-3" stroke="#107010" stroke-width="1.500"/>`;
g+=node(392,465)+sup(392)+sup(1112)+node(392,565)+node(1112,565);
g+=lbl(396,258,'5')+lbl(516,258,'10')+lbl(636,258,'15')+lbl(756,258,'20')+lbl(396,338,'4')+lbl(396,418,'3')+lbl(396,478,'22')+lbl(396,498,'2')+lbl(456,538,'41')+lbl(456,578,'33')+lbl(396,578,'21')+lbl(397,578,'32')+lbl(1116,578,'27');
document.getElementById('model').innerHTML=g;
</script>
</body>
</html>
